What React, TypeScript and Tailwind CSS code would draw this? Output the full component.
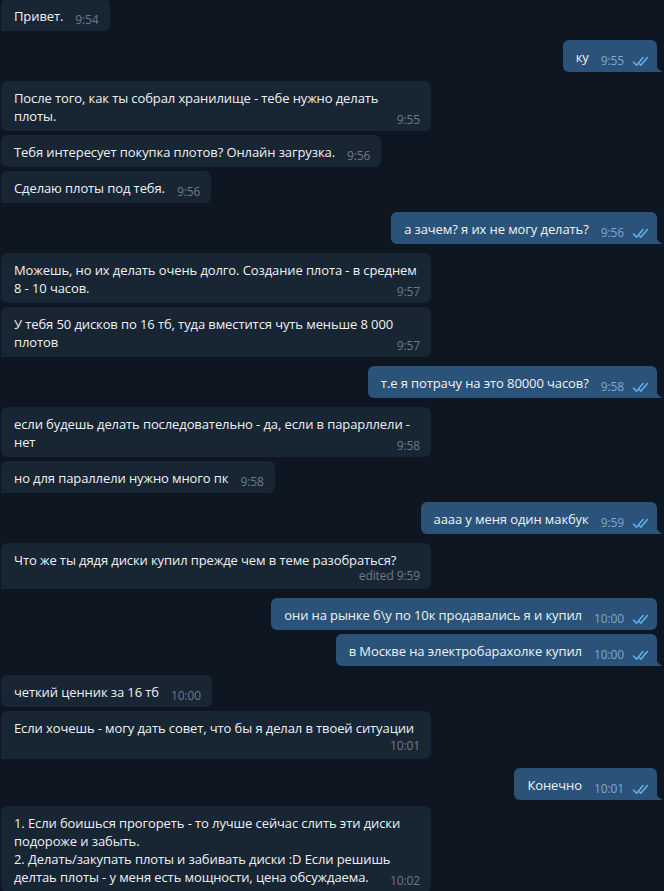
import React from "react";

type Msg = {
  out?: boolean;
  lines: string[];
  time: string;
  edited?: boolean;
  last?: boolean;
  ownRow?: boolean;
  gap: "group" | "same" | "first" | "tight";
};

const messages: Msg[] = [
  { lines: ["Привет."], time: "9:54", last: true, gap: "first" },
  { out: true, lines: ["ку"], time: "9:55", last: true, gap: "group" },
  { lines: ["После того, как ты собрал хранилище - тебе нужно делать", "плоты."], time: "9:55", gap: "group" },
  { lines: ["Тебя интересует покупка плотов? Онлайн загрузка."], time: "9:56", gap: "same" },
  { lines: ["Сделаю плоты под тебя."], time: "9:56", last: true, gap: "same" },
  { out: true, lines: ["а зачем? я их не могу делать?"], time: "9:56", last: true, gap: "group" },
  { lines: ["Можешь, но их делать очень долго. Создание плота - в среднем", "8 - 10 часов."], time: "9:57", gap: "group" },
  { lines: ["У тебя 50 дисков по 16 тб, туда вместится чуть меньше 8 000", "плотов"], time: "9:57", last: true, gap: "same" },
  { out: true, lines: ["т.е я потрачу на это 80000 часов?"], time: "9:58", last: true, gap: "group" },
  { lines: ["если будешь делать последовательно - да, если в парарллели -", "нет"], time: "9:58", gap: "group" },
  { lines: ["но для параллели нужно много пк"], time: "9:58", last: true, gap: "same" },
  { out: true, lines: ["аааа у меня один макбук"], time: "9:59", last: true, gap: "group" },
  { lines: ["Что же ты дядя диски купил прежде чем в теме разобраться?"], time: "9:59", edited: true, ownRow: true, last: true, gap: "group" },
  { out: true, lines: ["они на рынке б\\у по 10к продавались я и купил"], time: "10:00", gap: "group" },
  { out: true, lines: ["в Москве на электробарахолке купил"], time: "10:00", last: true, gap: "same" },
  { lines: ["четкий ценник за 16 тб"], time: "10:00", gap: "group" },
  { lines: ["Если хочешь - могу дать совет, что бы я делал в твоей ситуации"], time: "10:01", ownRow: true, last: true, gap: "same" },
  { out: true, lines: ["Конечно"], time: "10:01", last: true, gap: "group" },
  {
    lines: [
      "1. Если боишься прогореть - то лучше сейчас слить эти диски",
      "подороже и забыть.",
      "2. Делать/закупать плоты и забивать диски :D Если решишь",
      "делтаь плоты - у меня есть мощности, цена обсуждаема.",
    ],
    time: "10:02",
    gap: "tight",
  },
];

function Checks() {
  return (
    <svg width="18" height="11" viewBox="0 0 18 11" fill="none" className="shrink-0">
      <path d="M1.5 6 L4.6 9.2 L11 1.6" stroke="#64b2ec" strokeWidth="1.5" strokeLinecap="round" strokeLinejoin="round" />
      <path d="M7.6 8 L8.8 9.2 L15.4 1.6" stroke="#64b2ec" strokeWidth="1.5" strokeLinecap="round" strokeLinejoin="round" />
    </svg>
  );
}

function Meta({ m }: { m: Msg }) {
  return (
    <span
      className={`inline-flex items-center gap-[8px] text-[12px] leading-[14px] whitespace-nowrap ${
        m.out ? "text-[#7ea8d0]" : "text-[#6b7b8a]"
      }`}
    >
      <span>{m.edited ? `edited ${m.time}` : m.time}</span>
      {m.out && <Checks />}
    </span>
  );
}

// outgoing bubbles get the little curved tail on the bottom right
function Tail({ out }: { out?: boolean }) {
  if (!out) return null;
  return (
    <svg width="7" height="10" viewBox="0 0 7 10" className="absolute bottom-0 right-[-6px]">
      <path d="M0 0 C0 5 2 8 7 10 L0 10 Z" fill="#2b5278" />
    </svg>
  );
}

function Bubble({ m }: { m: Msg }) {
  const multi = m.lines.length > 1 || m.ownRow;
  const bg = m.out ? "bg-[#2b5278]" : "bg-[#182533]";
  const corner = m.last ? (m.out ? "rounded-br-none" : "rounded-bl-none") : "";
  const mt =
    m.gap === "first" ? "mt-[-1px]" : m.gap === "group" ? "mt-[9px]" : m.gap === "tight" ? "mt-[6px]" : "mt-[4px]";

  return (
    <div className={`flex ${m.out ? "justify-end pr-[7px]" : "justify-start pl-[1px]"} ${mt}`}>
      {multi ? (
        <div className={`relative w-[430px] rounded-[6px] ${corner} ${bg} pl-[13px] pr-[11px] pt-[8px] pb-[6px]`}>
          <div className="leading-[18px]">
            {m.lines.map((l, i) => (
              <div key={i} className="whitespace-nowrap">
                {l}
              </div>
            ))}
          </div>
          <div className={`flex justify-end ${m.ownRow ? (m.edited ? "" : "mt-[2px]") : "mt-[-12px] mb-[-2px]"}`}>
            <Meta m={m} />
          </div>
          {m.last && <Tail out={m.out} />}
        </div>
      ) : (
        <div
          className={`relative flex items-end rounded-[6px] ${corner} ${bg} pl-[13px] ${
            m.out ? "pr-[7px]" : "pr-[11px]"
          } pt-[8px] pb-[6px]`}
        >
          <span className="leading-[18px] whitespace-nowrap">{m.lines[0]}</span>
          <span className="ml-[12px] mb-[-2px] flex">
            <Meta m={m} />
          </span>
          {m.last && <Tail out={m.out} />}
        </div>
      )}
    </div>
  );
}

export default function App() {
  return (
    <div
      className="h-[891px] w-[664px] overflow-hidden bg-[#0e1621] text-[13px] tracking-[-0.1px] text-[#eef2f5]"
      style={{ fontFamily: '"Open Sans", "Noto Sans", sans-serif' }}
    >
      <div className="flex flex-col">
        {messages.map((m, i) => (
          <Bubble key={i} m={m} />
        ))}
      </div>
    </div>
  );
}
